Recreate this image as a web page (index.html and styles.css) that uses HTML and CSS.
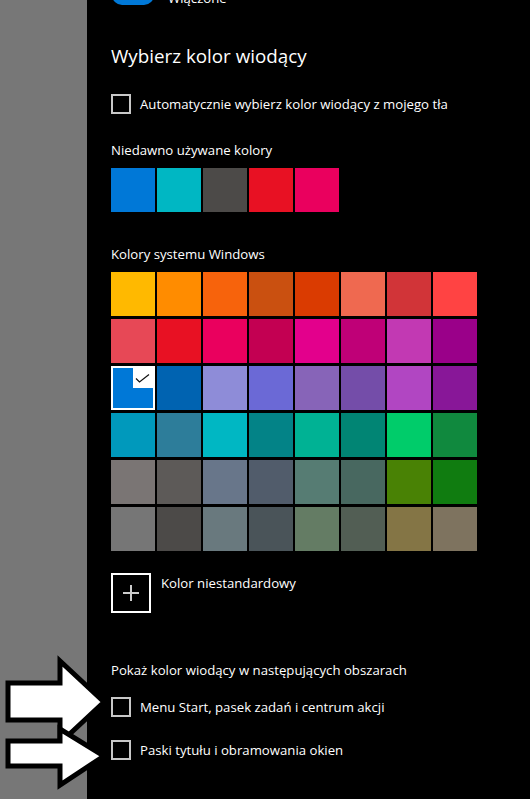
FILE: index.html
```html
<!DOCTYPE html>
<html lang="pl">
<head>
    <meta charset="UTF-8">
    <meta name="viewport" content="width=device-width, initial-scale=1.0">
    <title>Kolory</title>
    <link rel="stylesheet" href="styles.css">
</head>
<body>

    <!-- Gray strip on the left -->
    <div class="sidebar"></div>

    <!-- Settings panel -->
    <main class="panel">
        <div class="toggle-row">
            <span class="toggle"><span class="knob"></span></span>
            <span class="toggle-label">Włączone</span>
        </div>

        <h2 class="title">Wybierz kolor wiodący</h2>

        <label class="check-row auto-row">
            <span class="box"></span>
            <span>Automatycznie wybierz kolor wiodący z mojego tła</span>
        </label>

        <p class="caption recent-caption">Niedawno używane kolory</p>
        <div class="recent">
            <span class="swatch" style="background:#0078d7"></span>
            <span class="swatch" style="background:#00b7c3"></span>
            <span class="swatch" style="background:#4c4a48"></span>
            <span class="swatch" style="background:#e81123"></span>
            <span class="swatch" style="background:#ea005e"></span>
        </div>

        <p class="caption system-caption">Kolory systemu Windows</p>
        <div class="palette" id="palette">
            <!-- filled by script below -->
        </div>

        <div class="custom-row">
            <span class="custom-box"></span>
            <span class="custom-label">Kolor niestandardowy</span>
        </div>

        <p class="caption areas-caption">Pokaż kolor wiodący w następujących obszarach</p>

        <label class="check-row start-row">
            <span class="box"></span>
            <span>Menu Start, pasek zadań i centrum akcji</span>
        </label>

        <label class="check-row title-row">
            <span class="box"></span>
            <span>Paski tytułu i obramowania okien</span>
        </label>
    </main>

    <!-- Pointer arrows -->
    <svg class="arrows" width="120" height="140" viewBox="0 650 120 140">
        <polygon points="8,683 60,683 60,661 104,702 60,743 60,720 8,720" />
        <polygon points="8,741 60,741 60,729 104,756 60,785 60,766 8,766" />
    </svg>

    <script>
        const colors = [
            '#ffb900', '#ff8c00', '#f7630c', '#ca5010', '#da3b01', '#ef6950', '#d13438', '#ff4343',
            '#e74856', '#e81123', '#ea005e', '#c30052', '#e3008c', '#bf0077', '#c239b3', '#9a0089',
            '#0078d7', '#0063b1', '#8e8cd8', '#6b69d6', '#8764b8', '#744da9', '#b146c2', '#881798',
            '#0099bc', '#2d7d9a', '#00b7c3', '#038387', '#00b294', '#018574', '#00cc6a', '#10893e',
            '#7a7574', '#5d5a58', '#68768a', '#515c6b', '#567c73', '#486860', '#498205', '#107c10',
            '#767676', '#4c4a48', '#69797e', '#4a5459', '#647c64', '#525e54', '#847545', '#7e735f'
        ];
        const selected = 16;

        const palette = document.getElementById('palette');
        colors.forEach((c, i) => {
            const cell = document.createElement('span');
            cell.className = 'swatch' + (i === selected ? ' selected' : '');
            cell.style.background = c;
            if (i === selected) {
                cell.innerHTML = `
                    <span class="tick">
                        <svg width="22" height="22" viewBox="0 0 22 22">
                            <path d="M3 12.5 L6.5 16 L16 8.5" fill="none" stroke="#111" stroke-width="1.2"/>
                        </svg>
                    </span>`;
            }
            palette.appendChild(cell);
        });
    </script>

</body>
</html>
```

FILE: styles.css
```css
/* General styling */
body {
    margin: 0;
    height: 799px;
    overflow: hidden;
    display: flex;
    background: #000;
    color: #fff;
    font-family: "Open Sans", "Noto Sans", sans-serif;
    font-size: 13.2px;
    line-height: 20px;
    position: relative;
}

.sidebar {
    width: 87px;
    flex: none;
    background: #777;
}

.panel {
    flex: 1;
    padding-left: 24px;
}

p {
    margin: 0;
}

/* Toggle cut by the top edge */
.toggle-row {
    display: flex;
    align-items: flex-start;
    gap: 14px;
    height: 20px;
    margin-top: -15px;
}

.toggle {
    width: 42px;
    height: 20px;
    margin-left: 1px;
    border-radius: 10px;
    background: #0078d7;
    position: relative;
}

.knob {
    position: absolute;
    right: 5px;
    top: 5px;
    width: 10px;
    height: 10px;
    border-radius: 50%;
    background: #fff;
}

.toggle-label {
    margin-top: 3px;
}

/* Heading */
.title {
    margin: 37px 0 0;
    font-size: 18.8px;
    font-weight: normal;
    line-height: 28px;
}

/* Checkbox rows */
.check-row {
    display: flex;
    align-items: center;
    gap: 9px;
    height: 20px;
}

.box {
    width: 16px;
    height: 16px;
    border: 2px solid #c8c8c8;
}

.auto-row {
    margin-top: 24px;
}

.start-row {
    margin-top: 17px;
}

.title-row {
    margin-top: 23px;
}

/* Section captions */
.recent-caption {
    margin-top: 26px;
}

.system-caption {
    margin-top: 32px;
}

.areas-caption {
    margin-top: 47px;
}

/* Colour swatches */
.recent {
    display: flex;
    gap: 2px;
    margin-top: 8px;
}

.palette {
    display: grid;
    grid-template-columns: repeat(8, 44px);
    grid-auto-rows: 44px;
    column-gap: 2px;
    row-gap: 3px;
    margin-top: 8px;
}

.swatch {
    display: block;
    width: 44px;
    height: 44px;
}

.swatch.selected {
    box-sizing: border-box;
    border: 2px solid #fff;
    position: relative;
}

.tick {
    position: absolute;
    top: -2px;
    right: -2px;
    width: 22px;
    height: 22px;
    background: #fff;
}

.tick svg {
    display: block;
}

/* Custom colour button */
.custom-row {
    display: flex;
    align-items: flex-start;
    gap: 10px;
    margin-top: 22px;
}

.custom-box {
    width: 36px;
    height: 36px;
    border: 2px solid #fff;
    position: relative;
}

.custom-box::before,
.custom-box::after {
    content: "";
    position: absolute;
    background: #ccc;
}

.custom-box::before {
    left: 10px;
    top: 17px;
    width: 16px;
    height: 2px;
}

.custom-box::after {
    left: 17px;
    top: 10px;
    width: 2px;
    height: 16px;
}

/* Arrows over the left edge */
.arrows {
    position: absolute;
    left: 0;
    top: 650px;
}

.arrows polygon {
    fill: #fff;
    stroke: #000;
    stroke-width: 5;
    stroke-linejoin: miter;
}
```
